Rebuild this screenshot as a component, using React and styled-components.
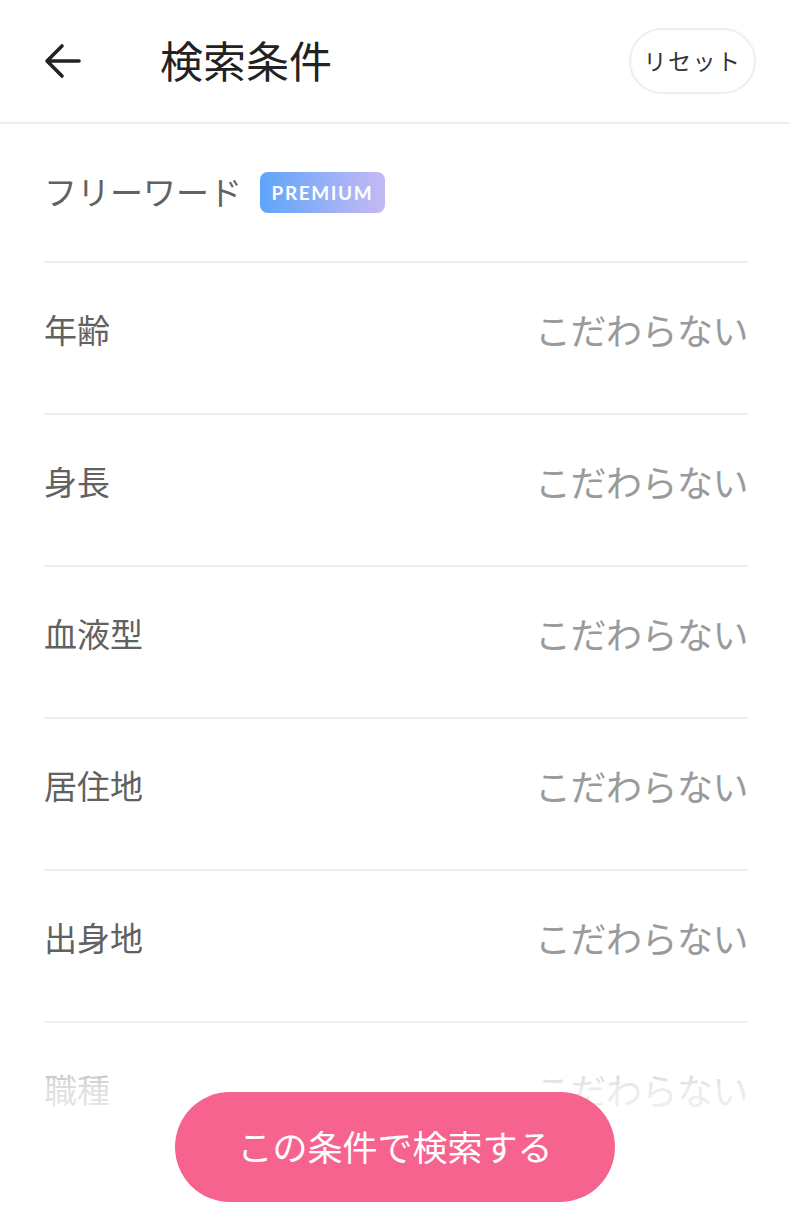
import React from "react";
import styled, { createGlobalStyle } from "styled-components";

const Global = createGlobalStyle`
  html, body { margin: 0; padding: 0; background: #fff; overflow: hidden; }
  body {
    font-family: "Noto Sans CJK JP", "Noto Sans", sans-serif;
    -webkit-font-smoothing: antialiased;
  }
  * { box-sizing: border-box; }
`;

const Page = styled.div`
  position: relative;
  width: 790px;
  height: 1218px;
  overflow: hidden;
  background: #fff;
`;

const Header = styled.header`
  height: 124px;
  border-bottom: 2px solid #eeeeee;
  display: flex;
  align-items: center;
  padding: 0 34px 0 44px;
`;

const BackButton = styled.button`
  width: 38px;
  height: 38px;
  padding: 0;
  border: none;
  background: none;
  display: flex;
  align-items: center;
  justify-content: center;
`;

const Title = styled.h1`
  margin: 0 0 0 78px;
  font-size: 43px;
  font-weight: 400;
  color: #222;
  flex: 1;
  line-height: 1;
  padding-bottom: 4px;
`;

const ResetButton = styled.button`
  width: 127px;
  height: 66px;
  border-radius: 33px;
  border: 2px solid #eeeeee;
  background: #fff;
  font-family: inherit;
  font-size: 23px;
  font-weight: 400;
  color: #333;
  letter-spacing: 1.5px;
  display: flex;
  align-items: center;
  justify-content: center;
  padding: 0 0 2px;
`;

const List = styled.div`
  padding: 0 42px 0 44px;
`;

const Row = styled.div`
  height: ${(p) => (p.$first ? 139 : 152)}px;
  border-bottom: 2px solid #eeeeee;
  display: flex;
  align-items: center;
  justify-content: space-between;
  padding-bottom: ${(p) => (p.$first ? 2 : 18)}px;
`;

const LabelWrap = styled.div`
  display: flex;
  align-items: center;
  gap: 18px;
`;

const Label = styled.span`
  font-size: 33px;
  font-weight: 400;
  color: #616161;
  line-height: 1;
`;

const Value = styled.span`
  font-size: 36px;
  font-weight: 400;
  color: #9a9a9a;
  line-height: 1;
  letter-spacing: -0.5px;
`;

const Badge = styled.span`
  display: inline-flex;
  align-items: center;
  justify-content: center;
  width: 125px;
  height: 41px;
  border-radius: 8px;
  background: linear-gradient(90deg, #5ea4fb 0%, #a9b3f6 70%, #c3b9f4 100%);
  color: #fff;
  font-family: "Lato", "Noto Sans", sans-serif;
  font-weight: 700;
  font-size: 19px;
  letter-spacing: 1.6px;
  margin-top: 2px;
`;

const Footer = styled.div`
  position: absolute;
  left: 0;
  right: 0;
  bottom: 0;
  height: 200px;
  display: flex;
  justify-content: center;
  align-items: flex-end;
  padding-bottom: 16px;
  background: linear-gradient(
    180deg,
    rgba(255, 255, 255, 0) 0%,
    rgba(255, 255, 255, 0.8) 35%,
    rgba(255, 255, 255, 0.97) 75%,
    #fff 100%
  );
`;

const SearchButton = styled.button`
  width: 440px;
  height: 110px;
  border-radius: 55px;
  border: none;
  background: #f7638f;
  color: #fff;
  font-family: inherit;
  font-size: 35px;
  font-weight: 400;
  display: flex;
  align-items: center;
  justify-content: center;
  padding: 0 0 4px;
`;

const rows = ["年齢", "身長", "血液型", "居住地", "出身地", "職種"];

export default function App() {
  return (
    <Page>
      <Global />
      <Header>
        <BackButton aria-label="戻る">
          <svg width="38" height="38" viewBox="0 0 38 38" fill="none">
            <path
              d="M35 19H4M18 4L3 19l15 15"
              stroke="#222"
              strokeWidth="3.6"
              strokeLinecap="round"
              strokeLinejoin="round"
            />
          </svg>
        </BackButton>
        <Title>検索条件</Title>
        <ResetButton>リセット</ResetButton>
      </Header>
      <List>
        <Row $first>
          <LabelWrap>
            <Label>フリーワード</Label>
            <Badge>PREMIUM</Badge>
          </LabelWrap>
        </Row>
        {rows.map((r) => (
          <Row key={r}>
            <Label>{r}</Label>
            <Value>こだわらない</Value>
          </Row>
        ))}
      </List>
      <Footer>
        <SearchButton>この条件で検索する</SearchButton>
      </Footer>
    </Page>
  );
}
